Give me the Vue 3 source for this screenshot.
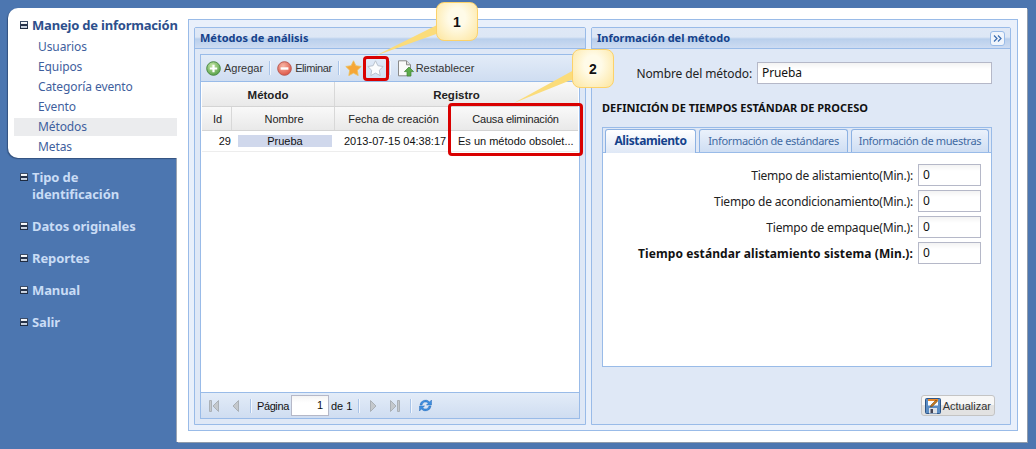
<script setup>
const subItems = [
  { label: 'Usuarios' },
  { label: 'Equipos' },
  { label: 'Categoría evento' },
  { label: 'Evento' },
  { label: 'Métodos', active: true },
  { label: 'Metas' },
]
const groups = [
  { label: 'Tipo de identificación', cls: 'g-first' },
  { label: 'Datos originales' },
  { label: 'Reportes' },
  { label: 'Manual' },
  { label: 'Salir' },
]
const fields = [
  { label: 'Tiempo de alistamiento(Min.):' },
  { label: 'Tiempo de acondicionamiento(Min.):' },
  { label: 'Tiempo de empaque(Min.):' },
  { label: 'Tiempo estándar alistamiento sistema (Min.):', bold: true },
]
</script>

<template>
  <div class="page">
    <aside class="side">
      <div class="card">
        <div class="head"><span class="mi"></span><span>Manejo de información</span></div>
        <div v-for="s in subItems" :key="s.label" class="sub" :class="{ on: s.active }">{{ s.label }}</div>
      </div>
      <div v-for="g in groups" :key="g.label" class="grp" :class="g.cls">
        <span class="mi"></span><span class="grp-t">{{ g.label }}</span>
      </div>
    </aside>

    <main class="white">
      <div class="frame">
        <section class="panel left">
          <div class="ptitle"><span>Métodos de análisis</span></div>
          <div class="pbody">
            <div class="grid">
              <div class="tbar">
                <span class="tb">
                  <svg width="15" height="15" viewBox="0 0 15 15"><defs><radialGradient id="gG" cx=".4" cy=".3" r=".8"><stop offset="0" stop-color="#c4e6a6"/><stop offset="1" stop-color="#4c9a3c"/></radialGradient></defs><circle cx="7.5" cy="7.5" r="6.8" fill="url(#gG)" stroke="#4c8a46"/><path d="M7.5 3.8v7.4M3.8 7.5h7.4" stroke="#fff" stroke-width="2.2"/></svg>
                  Agregar
                </span>
                <i class="sep s1"></i>
                <span class="tb elim">
                  <svg width="15" height="15" viewBox="0 0 15 15"><defs><radialGradient id="gR" cx=".4" cy=".3" r=".8"><stop offset="0" stop-color="#f6b4a4"/><stop offset="1" stop-color="#dc4a3a"/></radialGradient></defs><circle cx="7.5" cy="7.5" r="6.8" fill="url(#gR)" stroke="#b85a52"/><path d="M3.6 7.5h7.8" stroke="#fff" stroke-width="2.4"/></svg>
                  Eliminar
                </span>
                <i class="sep s2"></i>
                <svg class="star1" width="17" height="16" viewBox="0 0 17 16"><path d="M8.5.8l2.4 4.9 5.3.8-3.9 3.8.9 5.3-4.7-2.5-4.7 2.5.9-5.3L.8 6.5l5.3-.8z" fill="#f6a637" stroke="#eec05a" stroke-width=".8"/></svg>
                <svg class="star2" width="17" height="16" viewBox="0 0 17 16"><path d="M8.5.8l2.4 4.9 5.3.8-3.9 3.8.9 5.3-4.7-2.5-4.7 2.5.9-5.3L.8 6.5l5.3-.8z" fill="#fbfcfd" stroke="#b9c2cd" stroke-width="1"/></svg>
                <i class="sep s3"></i>
                <span class="tb rest">
                  <svg width="17" height="17" viewBox="0 0 17 17"><path d="M1.5.8h8l4 4v11h-12z" fill="#fafafa" stroke="#8a8a8a"/><path d="M9.5.8v4h4" fill="#ddd" stroke="#8a8a8a"/><path d="M12 7l4.6 4.6h-2.6V16h-4v-4.4H7.4z" fill="#5cab4a" stroke="#3f8433" stroke-width=".7"/></svg>
                  Restablecer
                </span>
              </div>
              <div class="hrow hr1">
                <div class="hc c-met">Método</div>
                <div class="hc c-reg">Registro</div>
              </div>
              <div class="hrow hr2">
                <div class="hc n c-id">Id</div>
                <div class="hc n c-nom">Nombre</div>
                <div class="hc n c-fec">Fecha de creación</div>
                <div class="hc n c-cau">Causa eliminación</div>
              </div>
              <div class="drow">
                <div class="c-id num">29</div>
                <div class="c-nom"><span class="hl">Prueba</span></div>
                <div class="c-fec txt">2013-07-15 04:38:17</div>
                <div class="c-cau txt">Es un método obsolet...</div>
              </div>
              <div class="gempty"></div>
              <div class="pager">
                <svg class="p1" width="10" height="12" viewBox="0 0 10 12"><path d="M.5.5h2v11h-2z" fill="#c4c8cc" stroke="#aab0b6"/><path d="M9.5.5v11L4 6z" fill="#c4c8cc" stroke="#aab0b6"/></svg>
                <svg class="p2" width="7" height="12" viewBox="0 0 7 12"><path d="M6.5.5v11L1 6z" fill="#c4c8cc" stroke="#aab0b6"/></svg>
                <i class="sep ps1"></i>
                <span class="pg">Página</span>
                <span class="pinp">1</span>
                <span class="de">de 1</span>
                <i class="sep ps2"></i>
                <svg class="p3" width="7" height="12" viewBox="0 0 7 12"><path d="M.5.5v11L6 6z" fill="#c4c8cc" stroke="#aab0b6"/></svg>
                <svg class="p4" width="10" height="12" viewBox="0 0 10 12"><path d="M.5.5v11L6 6z" fill="#c4c8cc" stroke="#aab0b6"/><path d="M7.5.5h2v11h-2z" fill="#c4c8cc" stroke="#aab0b6"/></svg>
                <i class="sep ps3"></i>
                <svg class="p5" width="15" height="15" viewBox="0 0 15 15"><path d="M2 7a5.5 5.5 0 0 1 9.6-3L13.5 2v5h-5l1.8-1.8A3.6 3.6 0 0 0 4 7z" fill="#3d8ee0" stroke="#2a6cb8" stroke-width=".5"/><path d="M13 8a5.5 5.5 0 0 1-9.6 3L1.5 13V8h5l-1.8 1.8A3.6 3.6 0 0 0 11 8z" fill="#3d8ee0" stroke="#2a6cb8" stroke-width=".5"/></svg>
              </div>
            </div>
          </div>
        </section>

        <section class="panel right">
          <div class="ptitle">
            <span>Información del método</span>
            <span class="tog">
              <svg width="9" height="9" viewBox="0 0 9 9"><path d="M1 1.5L4 4.5 1 7.5M5 1.5L8 4.5 5 7.5" fill="none" stroke="#3a6cb0" stroke-width="1.2"/></svg>
            </span>
          </div>
          <div class="rbody">
            <div class="name-row">
              <label>Nombre del método:</label>
              <span class="inp wide">Prueba</span>
            </div>
            <div class="deftitle">DEFINICIÓN DE TIEMPOS ESTÁNDAR DE PROCESO</div>
            <div class="tabs">
              <div class="strip">
                <span class="tab act">Alistamiento</span>
                <span class="tab t2">Información de estándares</span>
                <span class="tab t3">Información de muestras</span>
              </div>
              <div class="tabbody">
                <div v-for="f in fields" :key="f.label" class="frow">
                  <label :class="{ b: f.bold }">{{ f.label }}</label>
                  <span class="inp num0">0</span>
                </div>
              </div>
            </div>
            <div class="actions">
              <span class="btn">
                <svg width="16" height="16" viewBox="0 0 16 16"><rect x=".5" y=".5" width="15" height="15" rx="1" fill="#5b8dc4" stroke="#2c5588"/><rect x="3" y="1" width="10" height="6.5" fill="#fdfdfd"/><rect x="3" y="1" width="10" height="2" fill="#e8882c"/><path d="M6 7l5-5 1.4 1.4-5 5-2 .6z" fill="#c77a20" stroke="#5a3a10" stroke-width=".5"/><rect x="4" y="10" width="8" height="5.5" fill="#dfe3e8"/><rect x="5.5" y="11" width="2.5" height="4" fill="#445"/></svg>
                Actualizar
              </span>
            </div>
          </div>
        </section>
      </div>
    </main>

    <!-- screenshot annotations that lie over the interface -->
    <svg class="lines" width="1036" height="449" viewBox="0 0 1036 449">
      <path d="M437 25L375 56 439 33z" fill="#fbdc7a"/>
      <path d="M574 70L514 103 576 78z" fill="#fbdc7a"/>
    </svg>
    <div class="redbox rb1"></div>
    <div class="redbox rb2"></div>
    <div class="call c1">1</div>
    <div class="call c2">2</div>
  </div>
</template>

<style>
html, body { margin: 0; padding: 0; background: #4c76b0; }
</style>

<style scoped>
.page {
  position: relative; width: 1036px; height: 449px; overflow: hidden;
  background: #4c76b0; display: flex; padding: 8px 9px 7px 8px; box-sizing: border-box;
  font-family: "Liberation Sans", Arial, sans-serif; font-size: 11px; color: #111;
}
.side { width: 169px; flex: none; border-right: 1px solid #9aa4b2; box-sizing: border-box; }
.card {
  background: #fff; border-radius: 10px 0 0 10px; height: 150px; padding-top: 7px; box-sizing: border-box;
  box-shadow: -1px 1px 1px #33527f; margin-right: -1px; position: relative;
}
.head { display: flex; align-items: center; gap: 4px; padding-left: 12px; height: 20px; margin-bottom: 3px;
  font: bold 13px "Noto Sans", sans-serif; color: #2d4f8c; white-space: nowrap; letter-spacing: -.2px; }
.mi { flex: none; width: 8px; height: 8px; background: linear-gradient(#3d4f6a, #1d2a40); position: relative; box-sizing: border-box; }
.mi::after { content: ""; position: absolute; left: 1px; right: 1px; top: 1px; bottom: 1px; background: linear-gradient(#fff, #bcc8d8); }
.mi::before { content: ""; position: absolute; z-index: 1; left: 1px; right: 1px; top: 3px; height: 2px; background: #26334a; }
.sub { height: 18px; margin: 2px 0 2px 6px; padding-left: 24px; font: 12px/18px "Noto Sans", sans-serif; color: #3f5f9e; letter-spacing: -.1px; }
.sub.on { background: #ebecee; }
.grp { display: flex; align-items: flex-start; gap: 4px; padding-left: 12px; margin-bottom: 15px;
  font: bold 13px/17px "Noto Sans", sans-serif; color: #c9dcf5; letter-spacing: -.1px; }
.grp .mi { margin-top: 4px; }
.grp.g-first { margin-top: 11px; margin-bottom: 15px; }
.grp-t { width: 120px; }

.white { flex: 1; background: #fff; padding: 11px 9px 10px 11px; box-shadow: 1px 1px 0 #8f9bab; min-width: 0; }
.frame { height: 412px; box-sizing: border-box; border: 1px solid #99bbe8; background: #e9f0fb;
  display: flex; gap: 5px; padding: 7px 6px 5px 5px; }
.panel { border: 1px solid #99bbe8; background: #dfe8f6; display: flex; flex-direction: column; box-sizing: border-box; border-radius: 2px 2px 0 0; }
.left { width: 392px; flex: none; }
.right { flex: 1; min-width: 0; }
.ptitle {
  height: 21px; flex: none; box-sizing: border-box; padding: 2px 5px 0;
  display: flex; justify-content: space-between; align-items: flex-start;
  border-bottom: 1px solid #99bbe8;
  background: linear-gradient(#dfe8f6 0, #dde7f5 45%, #b9cfec 55%, #cddcf2 100%);
  font: bold 11px/16px "Noto Sans", sans-serif; color: #15428b;
}
.pbody { flex: 1; padding: 5px; display: flex; min-height: 0; }
.grid { flex: 1; border: 1px solid #99bbe8; background: #fff; display: flex; flex-direction: column; min-width: 0; }
.tbar { height: 27px; flex: none; box-sizing: border-box; display: flex; align-items: center; padding-left: 5px;
  background: linear-gradient(#e3ecf8, #cfddf1); border-bottom: 1px solid #99bbe8; color: #333; }
.tb { display: inline-flex; align-items: center; gap: 3px; white-space: nowrap; }
.elim { letter-spacing: -.4px; }
.sep { display: block; flex: none; width: 1px; height: 14px; background: #a9c4e8; box-shadow: 1px 0 0 #f2f6fc; }
.s1 { margin: 0 7px 0 6px; }
.s2 { margin: 0 6px 0 6px; }
.star1 { margin-right: 5px; }
.star2 { margin-right: 5px; }
.s3 { margin-right: 7px; }
.rest { gap: 2px; }

.hrow { display: flex; flex: none; background: linear-gradient(#f9f9f9, #e9e9e9); border-bottom: 1px solid #d4d4d4; margin-left: 1px; margin-right: 1px; }
.hr1 { height: 24px; }
.hr2 { height: 23px; }
.hc { display: flex; align-items: center; justify-content: center; box-sizing: border-box; border-right: 1px solid #d8d8d8; color: #222; }
.hc:last-child { border-right: 0; }
.hc.n { padding-left: 2px; }
.hc.c-cau { letter-spacing: -.2px; }
.hr1 .hc { font: bold 11.5px "Liberation Sans", sans-serif; padding-top: 1px; }
.c-met { width: 133px; }
.c-reg { flex: 1; }
.c-id { width: 30px; flex: none; }
.c-nom { width: 103px; flex: none; }
.c-fec { width: 116px; flex: none; }
.c-cau { flex: 1; min-width: 0; }
.drow { height: 20px; flex: none; display: flex; align-items: center; border-bottom: 1px solid #ededed; margin: 0 1px; white-space: nowrap; color: #111; }
.num { text-align: right; box-sizing: border-box; padding-right: 1px; }
.drow .c-nom { box-sizing: border-box; padding: 0 3px 0 6px; }
.hl { display: block; background: #d0d8ec; text-align: center; line-height: 12px; height: 12px; }
.txt { box-sizing: border-box; }
.drow .c-fec { padding-left: 9px; }
.drow .c-cau { padding-left: 7px; }
.gempty { flex: 1; }
.pager { height: 26px; flex: none; box-sizing: border-box; border-top: 1px solid #99bbe8; display: flex; align-items: center; padding-left: 8px;
  background: linear-gradient(#e3ecf8, #cfddf1); }
.p1 { margin-right: 13px; }
.p2 { margin-right: 11px; }
.ps1 { margin-right: 6px; }
.pg { width: 32px; margin-right: 2px; letter-spacing: -.4px; }
.pinp { width: 38px; height: 21px; box-sizing: border-box; border: 1px solid #b5b8c8; background: linear-gradient(#f4f4f4, #fff 35%); text-align: right; padding: 2px 5px 0 0; line-height: 15px; margin-right: 2px; }
.de { width: 21px; margin-right: 6px; white-space: nowrap; }
.ps2 { margin-right: 11px; }
.p3 { margin-right: 13px; }
.p4 { margin-right: 10px; }
.ps3 { margin-right: 7px; }

.tog { width: 13px; height: 13px; margin-top: 1px; border: 1px solid #99bbe8; border-radius: 3px; background: #f0f5fc; display: flex; align-items: center; justify-content: center; }
.rbody { flex: 1; padding: 13px 18px 8px 10px; display: flex; flex-direction: column; min-height: 0; }
.name-row { display: flex; align-items: center; justify-content: flex-end; gap: 5px; height: 22px;
  font: 12px "Noto Sans", sans-serif; color: #222; letter-spacing: -.1px; }
.inp { display: block; box-sizing: border-box; border: 1px solid #b5b8c8; background: linear-gradient(#f3f3f3, #fff 30%); height: 22px; font: 12px/20px "Noto Sans", sans-serif; padding-left: 4px; color: #111; }
.wide { width: 235px; }
.deftitle { font: bold 11px "Noto Sans", sans-serif; color: #111; margin-top: 16px; height: 16px; line-height: 16px; }
.tabs { margin-top: 11px; border: 1px solid #99bbe8; flex: none; height: 240px; display: flex; flex-direction: column; box-sizing: border-box; background: #fff; }
.strip { height: 25px; flex: none; box-sizing: border-box; border-bottom: 1px solid #99bbe8; background: #dfe8f6; display: flex; align-items: flex-end; gap: 3px; padding-left: 2px; }
.tab { box-sizing: border-box; height: 23px; padding-bottom: 2px; display: flex; align-items: center; justify-content: center;
  border: 1px solid #8db2e3; border-bottom: 0; border-radius: 3px 3px 0 0; background: linear-gradient(#eaf1fb, #cfdef3);
  font: 11px "Noto Sans", sans-serif; color: #416aa3; white-space: nowrap; letter-spacing: -.35px; }
.act { width: 91px; height: 24px; margin-bottom: -1px; background: linear-gradient(#fff, #dfe8f6); font: bold 12px "Noto Sans", sans-serif; color: #15428b; letter-spacing: -.4px; }
.t2 { width: 149px; }
.t3 { width: 138px; }
.tabbody { flex: 1; padding-top: 11px; background: #fff; }
.frow { display: flex; justify-content: flex-end; align-items: center; gap: 5px; height: 22px; margin-bottom: 4px; padding-right: 10px;
  font: 12px "Noto Sans", sans-serif; color: #222; letter-spacing: -.2px; }
.frow .b { font-weight: 700; color: #111; letter-spacing: .1px; }
.num0 { width: 63px; }
.actions { margin-top: auto; display: flex; justify-content: flex-end; margin-right: -3px; }
.btn { display: inline-flex; align-items: center; gap: 2px; height: 21px; box-sizing: border-box; padding: 0 3px 0 3px; border: 1px solid #c4c4c4; border-radius: 3px;
  background: linear-gradient(#f7f7f7 50%, #e2e2e2 50%); color: #333; font-size: 11px; }

.lines { position: absolute; left: 0; top: 0; pointer-events: none; }
.redbox { position: absolute; box-sizing: border-box; border: 3px solid #d90000; border-radius: 4px; }
.rb1 { left: 363px; top: 56px; width: 26px; height: 25px; }
.rb2 { left: 448px; top: 103px; width: 135px; height: 53px; }
.call { position: absolute; box-sizing: border-box; width: 42px; height: 39px; border: 1px solid #fcd26a; border-radius: 8px;
  background: radial-gradient(ellipse at 50% 40%, #fffbe8 30%, #fde59c 100%); display: flex; align-items: center; justify-content: center;
  font: bold 14px "Liberation Sans", sans-serif; color: #111; }
.c1 { left: 436px; top: 2px; }
.c2 { left: 572px; top: 49px; }
</style>
